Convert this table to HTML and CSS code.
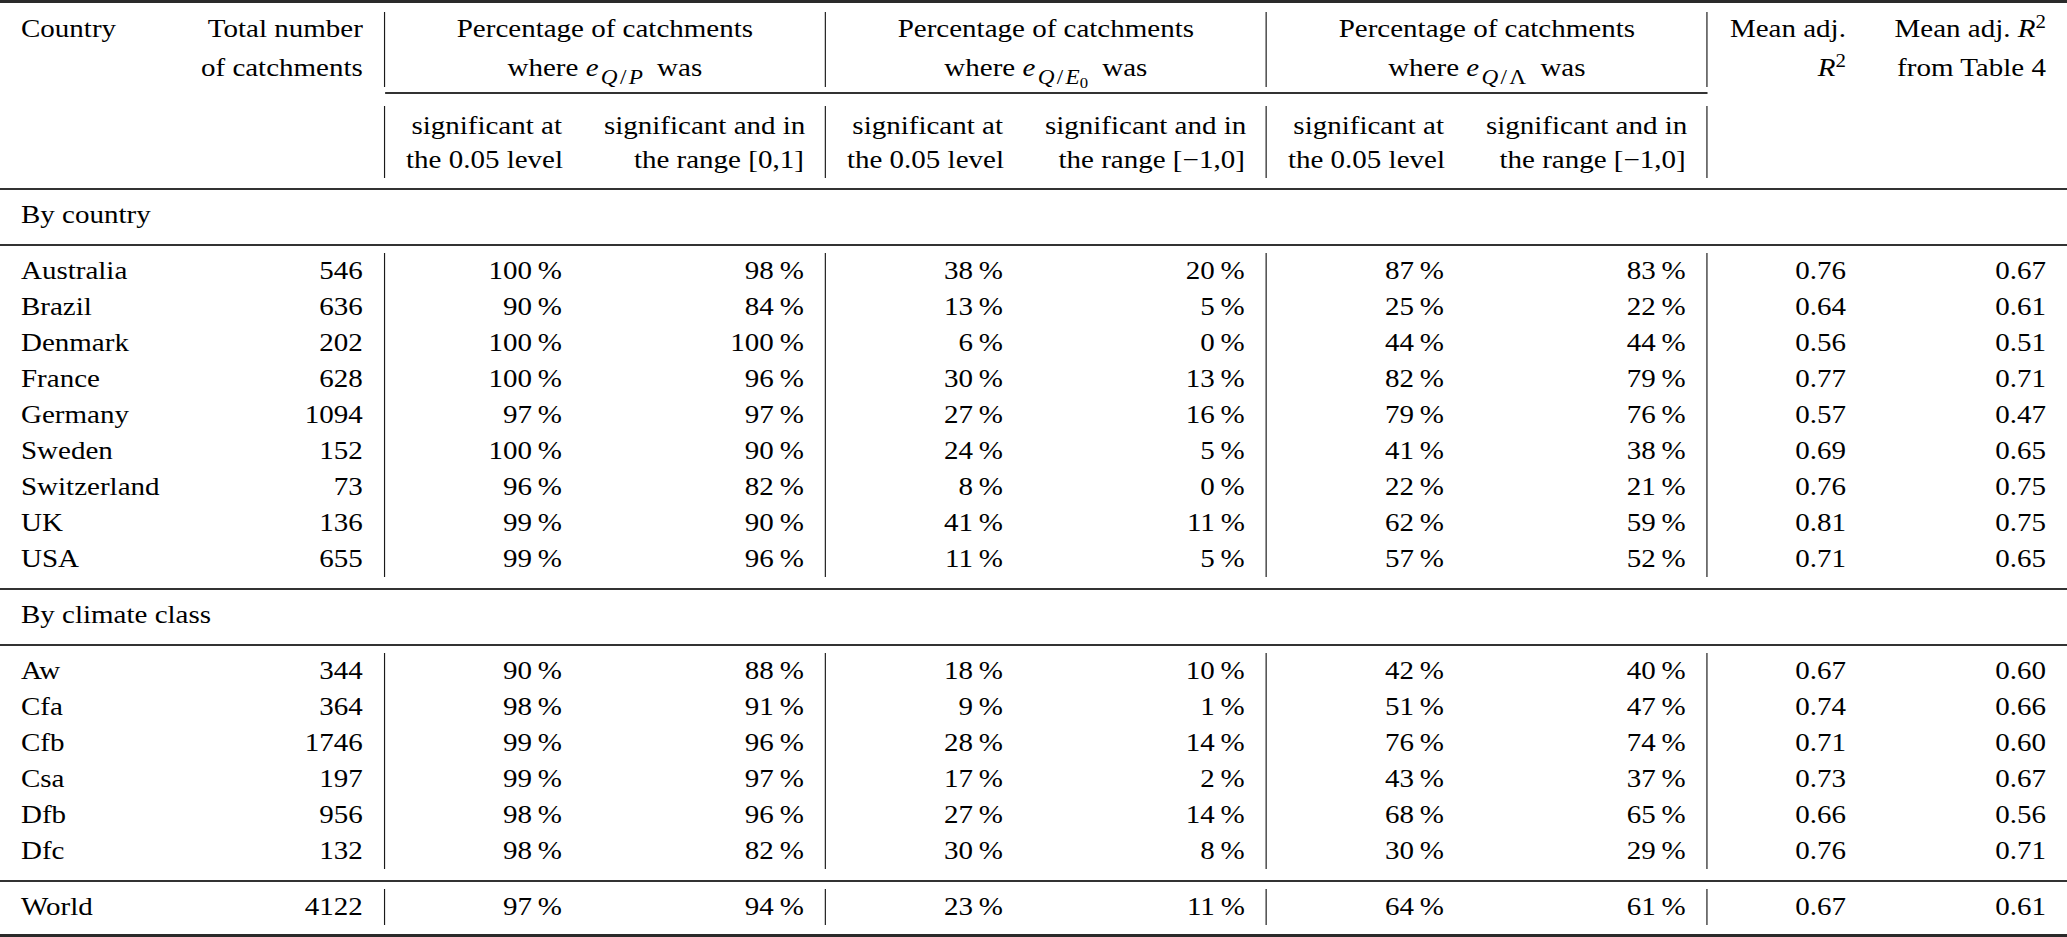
FILE: index.html
```html
<!DOCTYPE html>
<html lang="en">
<head>
<meta charset="utf-8">
<title>Table</title>
<link rel="stylesheet" href="styles.css">
</head>
<body>
<div class="table">
  <div class="head">
    <div class="grid h1">
      <div class="cell l"><div class="hx">Country</div></div>
      <div class="cell r v"><div class="hx">Total number<br>of catchments</div></div>
      <div class="cell ctr v"><div class="hx">Percentage of catchments<br>where <i>e</i><sub class="s1"><i>Q</i><span class="sl">/</span><i>P</i></sub> was</div></div>
      <div class="cell ctr v"><div class="hx">Percentage of catchments<br>where <i>e</i><sub class="s1"><i>Q</i><span class="sl">/</span><i>E</i><sub class="s2">0</sub></sub> was</div></div>
      <div class="cell ctr v"><div class="hx">Percentage of catchments<br>where <i>e</i><sub class="s1"><i>Q</i><span class="sl">/</span>Λ</sub> was</div></div>
      <div class="cell r"><div class="hx">Mean adj.<br><i>R</i><sup class="p1">2</sup></div></div>
      <div class="cell r"><div class="hx">Mean adj. <i>R</i><sup class="p1">2</sup><br>from Table 4</div></div>
    </div>
    <div class="grid cmid"><div class="cmidrule"></div></div>
    <div class="grid h2">
      <div class="cell"></div>
      <div class="cell v"></div>
      <div class="cell r">significant at<br>the 0.05 level</div>
      <div class="cell r v">significant and in<br>the range [0,1]</div>
      <div class="cell r">significant at<br>the 0.05 level</div>
      <div class="cell r v">significant and in<br>the range [−1,0]</div>
      <div class="cell r">significant at<br>the 0.05 level</div>
      <div class="cell r v">significant and in<br>the range [−1,0]</div>
      <div class="cell"></div>
      <div class="cell"></div>
    </div>
  </div>

  <div class="sec">By country</div>
  <div class="block">
    <div class="grid row"><div class="cell l">Australia</div><div class="cell r v">546</div><div class="cell r">100&#8201;%</div><div class="cell r v">98&#8201;%</div><div class="cell r">38&#8201;%</div><div class="cell r v">20&#8201;%</div><div class="cell r">87&#8201;%</div><div class="cell r v">83&#8201;%</div><div class="cell r">0.76</div><div class="cell r">0.67</div></div>
    <div class="grid row"><div class="cell l">Brazil</div><div class="cell r v">636</div><div class="cell r">90&#8201;%</div><div class="cell r v">84&#8201;%</div><div class="cell r">13&#8201;%</div><div class="cell r v">5&#8201;%</div><div class="cell r">25&#8201;%</div><div class="cell r v">22&#8201;%</div><div class="cell r">0.64</div><div class="cell r">0.61</div></div>
    <div class="grid row"><div class="cell l">Denmark</div><div class="cell r v">202</div><div class="cell r">100&#8201;%</div><div class="cell r v">100&#8201;%</div><div class="cell r">6&#8201;%</div><div class="cell r v">0&#8201;%</div><div class="cell r">44&#8201;%</div><div class="cell r v">44&#8201;%</div><div class="cell r">0.56</div><div class="cell r">0.51</div></div>
    <div class="grid row"><div class="cell l">France</div><div class="cell r v">628</div><div class="cell r">100&#8201;%</div><div class="cell r v">96&#8201;%</div><div class="cell r">30&#8201;%</div><div class="cell r v">13&#8201;%</div><div class="cell r">82&#8201;%</div><div class="cell r v">79&#8201;%</div><div class="cell r">0.77</div><div class="cell r">0.71</div></div>
    <div class="grid row"><div class="cell l">Germany</div><div class="cell r v">1094</div><div class="cell r">97&#8201;%</div><div class="cell r v">97&#8201;%</div><div class="cell r">27&#8201;%</div><div class="cell r v">16&#8201;%</div><div class="cell r">79&#8201;%</div><div class="cell r v">76&#8201;%</div><div class="cell r">0.57</div><div class="cell r">0.47</div></div>
    <div class="grid row"><div class="cell l">Sweden</div><div class="cell r v">152</div><div class="cell r">100&#8201;%</div><div class="cell r v">90&#8201;%</div><div class="cell r">24&#8201;%</div><div class="cell r v">5&#8201;%</div><div class="cell r">41&#8201;%</div><div class="cell r v">38&#8201;%</div><div class="cell r">0.69</div><div class="cell r">0.65</div></div>
    <div class="grid row"><div class="cell l">Switzerland</div><div class="cell r v">73</div><div class="cell r">96&#8201;%</div><div class="cell r v">82&#8201;%</div><div class="cell r">8&#8201;%</div><div class="cell r v">0&#8201;%</div><div class="cell r">22&#8201;%</div><div class="cell r v">21&#8201;%</div><div class="cell r">0.76</div><div class="cell r">0.75</div></div>
    <div class="grid row"><div class="cell l">UK</div><div class="cell r v">136</div><div class="cell r">99&#8201;%</div><div class="cell r v">90&#8201;%</div><div class="cell r">41&#8201;%</div><div class="cell r v">11&#8201;%</div><div class="cell r">62&#8201;%</div><div class="cell r v">59&#8201;%</div><div class="cell r">0.81</div><div class="cell r">0.75</div></div>
    <div class="grid row"><div class="cell l">USA</div><div class="cell r v">655</div><div class="cell r">99&#8201;%</div><div class="cell r v">96&#8201;%</div><div class="cell r">11&#8201;%</div><div class="cell r v">5&#8201;%</div><div class="cell r">57&#8201;%</div><div class="cell r v">52&#8201;%</div><div class="cell r">0.71</div><div class="cell r">0.65</div></div>
  </div>

  <div class="sec">By climate class</div>
  <div class="block">
    <div class="grid row"><div class="cell l">Aw</div><div class="cell r v">344</div><div class="cell r">90&#8201;%</div><div class="cell r v">88&#8201;%</div><div class="cell r">18&#8201;%</div><div class="cell r v">10&#8201;%</div><div class="cell r">42&#8201;%</div><div class="cell r v">40&#8201;%</div><div class="cell r">0.67</div><div class="cell r">0.60</div></div>
    <div class="grid row"><div class="cell l">Cfa</div><div class="cell r v">364</div><div class="cell r">98&#8201;%</div><div class="cell r v">91&#8201;%</div><div class="cell r">9&#8201;%</div><div class="cell r v">1&#8201;%</div><div class="cell r">51&#8201;%</div><div class="cell r v">47&#8201;%</div><div class="cell r">0.74</div><div class="cell r">0.66</div></div>
    <div class="grid row"><div class="cell l">Cfb</div><div class="cell r v">1746</div><div class="cell r">99&#8201;%</div><div class="cell r v">96&#8201;%</div><div class="cell r">28&#8201;%</div><div class="cell r v">14&#8201;%</div><div class="cell r">76&#8201;%</div><div class="cell r v">74&#8201;%</div><div class="cell r">0.71</div><div class="cell r">0.60</div></div>
    <div class="grid row"><div class="cell l">Csa</div><div class="cell r v">197</div><div class="cell r">99&#8201;%</div><div class="cell r v">97&#8201;%</div><div class="cell r">17&#8201;%</div><div class="cell r v">2&#8201;%</div><div class="cell r">43&#8201;%</div><div class="cell r v">37&#8201;%</div><div class="cell r">0.73</div><div class="cell r">0.67</div></div>
    <div class="grid row"><div class="cell l">Dfb</div><div class="cell r v">956</div><div class="cell r">98&#8201;%</div><div class="cell r v">96&#8201;%</div><div class="cell r">27&#8201;%</div><div class="cell r v">14&#8201;%</div><div class="cell r">68&#8201;%</div><div class="cell r v">65&#8201;%</div><div class="cell r">0.66</div><div class="cell r">0.56</div></div>
    <div class="grid row"><div class="cell l">Dfc</div><div class="cell r v">132</div><div class="cell r">98&#8201;%</div><div class="cell r v">82&#8201;%</div><div class="cell r">30&#8201;%</div><div class="cell r v">8&#8201;%</div><div class="cell r">30&#8201;%</div><div class="cell r v">29&#8201;%</div><div class="cell r">0.76</div><div class="cell r">0.71</div></div>
  </div>

  <div class="block last">
    <div class="grid row"><div class="cell l">World</div><div class="cell r v">4122</div><div class="cell r">97&#8201;%</div><div class="cell r v">94&#8201;%</div><div class="cell r">23&#8201;%</div><div class="cell r v">11&#8201;%</div><div class="cell r">64&#8201;%</div><div class="cell r v">61&#8201;%</div><div class="cell r">0.67</div><div class="cell r">0.61</div></div>
  </div>
</div>
</body>
</html>
```

FILE: styles.css
```css
html, body {
  margin: 0;
  padding: 0;
  background: #ffffff;
}

body {
  font-family: "Liberation Serif", "Times New Roman", serif;
  font-size: 25px;
  color: #000000;
  overflow: hidden;
}

*, *::before, *::after {
  box-sizing: border-box;
}

.table {
  width: 1782px;
  transform: scaleX(1.16);
  transform-origin: 0 0;
}

.grid {
  display: grid;
  grid-template-columns: 153.45px 178.45px 170.69px 209.48px 170.69px 209.48px 170.69px 209.48px 137.07px 172.41px;
}

.cell {
  padding: 0 18.1px;
  white-space: nowrap;
}

.l { text-align: left; }
.r { text-align: right; }
.ctr { text-align: center; grid-column: span 2; }
.v { border-right: 1px solid #1a1a1a; }

.head {
  border-top: 3px solid #2a2a2a;
  border-bottom: 2px solid #333333;
  padding: 9px 0 10px;
}

.h1 .cell {
  height: 75px;
  line-height: 39px;
}

.hx {
  margin-top: -3px;
}

.cmid {
  margin-top: 5px;
}

.cmidrule {
  grid-column: 3 / 9;
  height: 2px;
  background: #333333;
}

.h2 {
  margin-top: 12px;
}

.h2 .cell {
  height: 72px;
  padding-top: 3px;
  line-height: 34px;
}

.s1 {
  font-size: 0.8em;
  vertical-align: -8px;
  line-height: 0;
  margin-left: 2px;
  margin-right: 6px;
}

.sl {
  margin: 0 2px;
}

.s2 {
  font-size: 0.72em;
  vertical-align: -4px;
  line-height: 0;
}

.p1 {
  font-size: 0.72em;
  vertical-align: 9px;
  line-height: 0;
}

.sec {
  padding: 7px 0 11px 18.1px;
  line-height: 36px;
  border-bottom: 2px solid #333333;
}

.block {
  padding: 7px 0 11px;
  border-bottom: 2px solid #333333;
}

.block.last {
  padding-bottom: 9px;
  border-bottom: 3px solid #2a2a2a;
}

.row .cell {
  height: 36px;
  line-height: 36px;
}
```
